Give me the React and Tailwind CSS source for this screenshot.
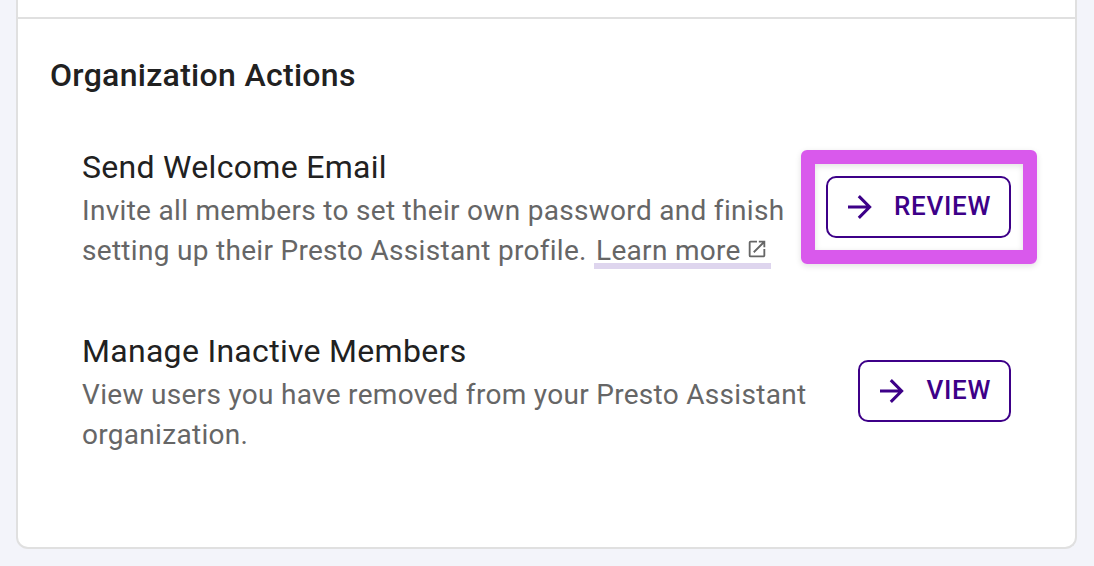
import { MdOpenInNew } from "react-icons/md";

const actions = [
  {
    title: "Send Welcome Email",
    description: "Invite all members to set their own password and finish setting up their Presto Assistant profile.",
    link: "Learn more",
    button: "Review",
    highlighted: true,
  },
  {
    title: "Manage Inactive Members",
    description: "View users you have removed from your Presto Assistant organization.",
    button: "View",
  },
];

function ArrowRight({ className }) {
  return (
    <svg viewBox="0 0 24 24" fill="currentColor" className={className}>
      <path d="M4 11v2h12l-5.5 5.5 1.42 1.42L19.84 12l-7.92-7.92L10.5 5.5 16 11H4z" />
    </svg>
  );
}

function ActionButton({ label, highlighted }) {
  return (
    <div className="relative shrink-0">
      {highlighted && (
        <div className="absolute -top-[26px] -right-[26px] -bottom-[26px] -left-[25px] rounded-[6px] border-[14px] border-[#d959ec] shadow-[0_2px_6px_rgba(0,0,0,0.12),inset_0_2px_6px_rgba(0,0,0,0.12)]" />
      )}
      <button className="relative flex h-[62px] items-center rounded-[10px] border-2 border-[#3d0088] pr-[18px] pl-3.5 text-[26px] font-medium tracking-[0.7px] text-[#3d0088] uppercase">
        <ArrowRight className="mr-4 size-9" />
        <span className="pb-0.5">{label}</span>
      </button>
    </div>
  );
}

function ActionRow({ action }) {
  return (
    <li className="flex h-[184px] items-start justify-between">
      <div className="w-[730px]">
        <h3 className="text-[32px] leading-[48px] tracking-[0.3px] text-[#212121]">{action.title}</h3>
        <p className="text-[28px] leading-10 tracking-[0.3px] text-[#666]">
          {action.description}{" "}
          {action.link && (
            <a href="#" className="px-0.5 pb-0.5 whitespace-nowrap shadow-[inset_0_-6px_#ded5ee]">
              {action.link}
              <MdOpenInNew className="mr-px ml-[5px] inline size-[22px] -translate-y-1" />
            </a>
          )}
        </p>
      </div>
      <div className="pt-[33px]">
        <ActionButton label={action.button} highlighted={action.highlighted} />
      </div>
    </li>
  );
}

export default function App() {
  return (
    <div className="h-[566px] overflow-hidden bg-[#f3f4fa] pr-[17px] pl-4 font-['Roboto',sans-serif]">
      <section className="h-[549px] rounded-b-xl border-2 border-t-0 border-[#e0e0e0] bg-white">
        <div className="h-[19px] border-b-2 border-[#e0e0e0]" />
        <h2 className="px-8 pt-8 text-[32px] leading-[48px] font-medium tracking-[0.3px] text-[#212121]">
          Organization Actions
        </h2>
        <ul className="pt-11 pr-16 pl-16">
          {actions.map((action) => (
            <ActionRow key={action.title} action={action} />
          ))}
        </ul>
      </section>
    </div>
  );
}
